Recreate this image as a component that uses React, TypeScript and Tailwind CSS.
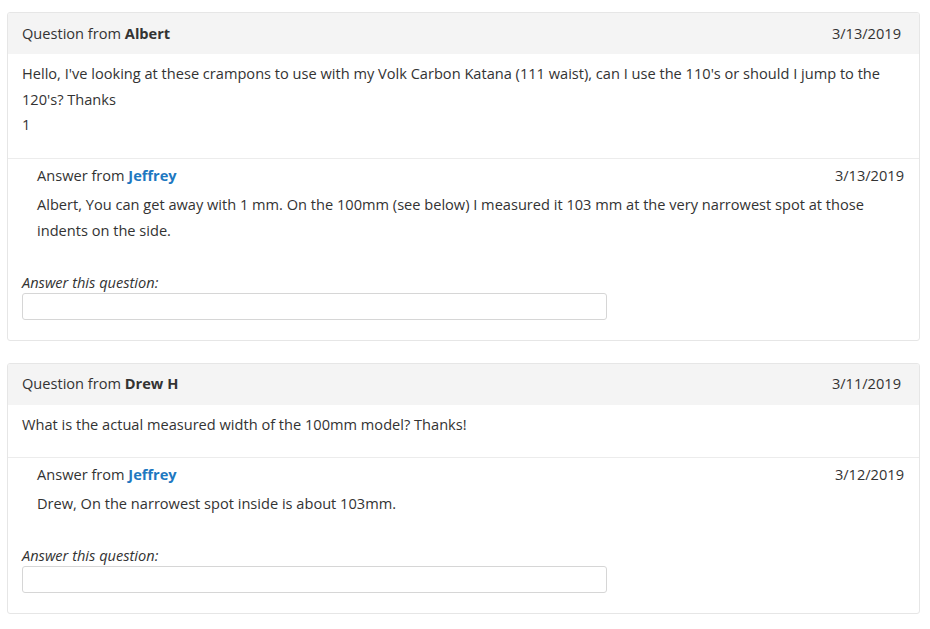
const qa = [
  {
    asker: 'Albert',
    date: '3/13/2019',
    question: [
      "Hello, I've looking at these crampons to use with my Volk Carbon Katana (111 waist), can I use the 110's or should I jump to the 120's? Thanks",
      '1',
    ],
    answerer: 'Jeffrey',
    answerDate: '3/13/2019',
    answer:
      'Albert, You can get away with 1 mm. On the 100mm (see below) I measured it 103 mm at the very narrowest spot at those indents on the side.',
  },
  {
    asker: 'Drew H',
    date: '3/11/2019',
    question: ['What is the actual measured width of the 100mm model? Thanks!'],
    answerer: 'Jeffrey',
    answerDate: '3/12/2019',
    answer: 'Drew, On the narrowest spot inside is about 103mm.',
  },
]

const QuestionCard = ({ item }: { item: (typeof qa)[number] }) => (
  <div className="border border-[#e6e6e6] rounded-[3px] bg-white overflow-hidden">
    <div className="h-[41px] bg-[#f4f4f4] flex items-center justify-between pl-[14px] pr-[18px]">
      <div>
        Question from <span className="font-bold">{item.asker}</span>
      </div>
      <div>{item.date}</div>
    </div>
    <div className="px-[14px] pt-[7px] pb-[20px] leading-[25.5px]">
      {item.question.map((line, i) => (
        <div key={i}>{line}</div>
      ))}
    </div>
    <div className="border-t border-[#ececec] pt-[4px] pb-[20px]">
      <div className="pl-[29px] pr-[15px]">
        <div className="flex justify-between leading-[25px] mb-[3px]">
          <div>
            Answer from <span className="font-bold text-[#1d78c1]">{item.answerer}</span>
          </div>
          <div>{item.answerDate}</div>
        </div>
        <div className="leading-[26px] pr-[20px]">{item.answer}</div>
      </div>
      <div className="px-[14px] mt-[27px]">
        <div className="italic leading-[25px] -mb-[2px]">Answer this question:</div>
        <input
          type="text"
          className="block w-[585px] h-[27px] border border-[#d6d6d6] rounded-[3px] bg-white outline-none"
        />
      </div>
    </div>
  </div>
)

export default function App() {
  return (
    <div
      className="min-h-screen bg-white text-[14.6px] text-[#333333] pt-[12px] pl-[7px] pr-[10px] pb-[12px] flex flex-col gap-[22px]"
      style={{ fontFamily: '"Open Sans", "Liberation Sans", sans-serif' }}
    >
      {qa.map((item) => (
        <QuestionCard key={item.asker} item={item} />
      ))}
    </div>
  )
}
